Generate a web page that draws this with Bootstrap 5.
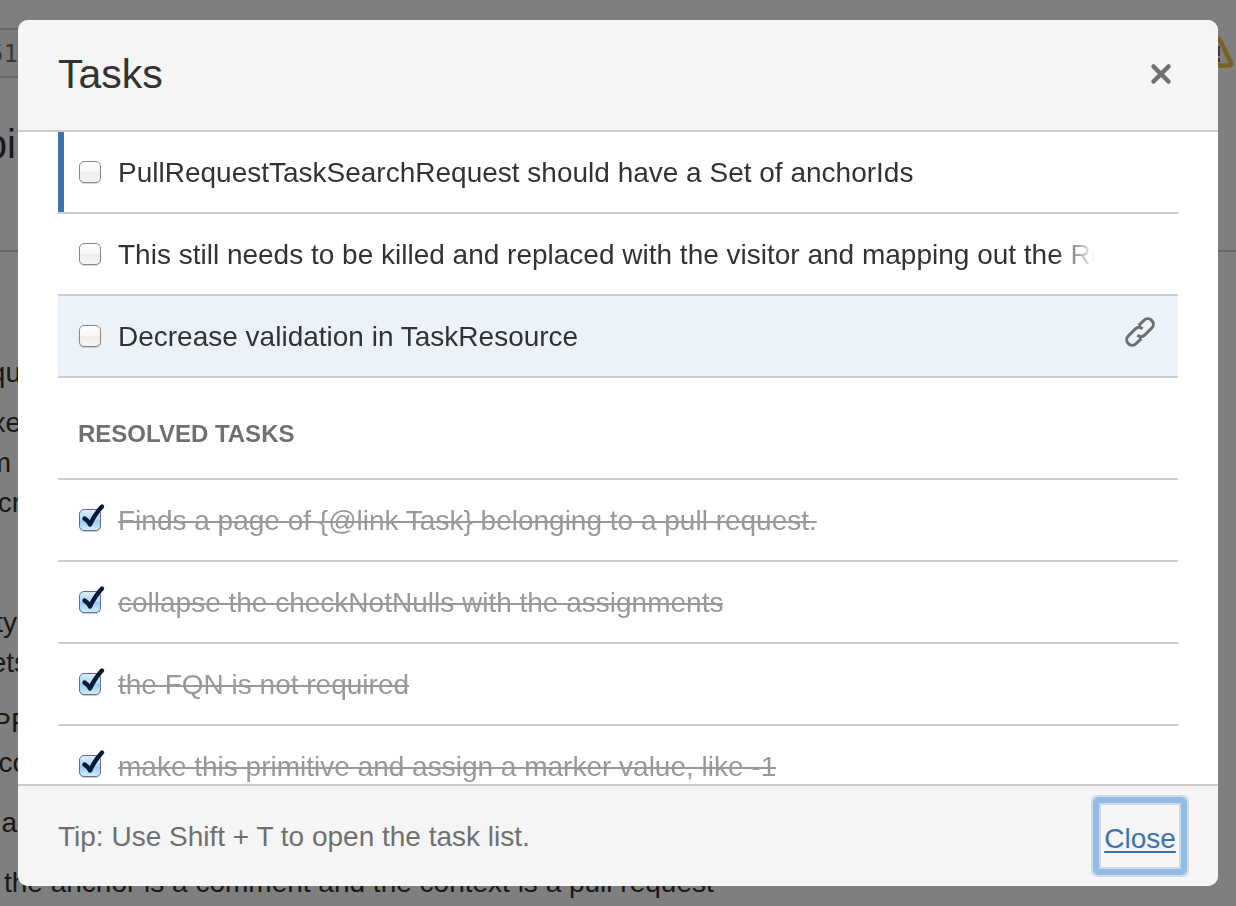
<!DOCTYPE html>
<html lang="en">
<head>
<meta charset="utf-8">
<meta name="viewport" content="width=device-width, initial-scale=1">
<title>Tasks</title>
<link href="https://cdn.jsdelivr.net/npm/bootstrap@5.3.0/dist/css/bootstrap.min.css" rel="stylesheet">
<style>
  body { font-family: "Liberation Sans", Arial, sans-serif; font-size: 28px; line-height: 40px; color: #333; background: #fff; height: 100vh; overflow: hidden; }
  .line { border-color: #ccc !important; border-width: 2px !important; }

  /* page behind the dialog */
  .branch-bar { padding-top: 28px; }
  .commit { width: 18px; height: 50px; border: solid #ccc; border-width: 2px 0; background: #f5f5f5; font: 24px/48px "DejaVu Sans Mono", monospace; color: #707070; }
  .pr-title { width: 16px; height: 172px; padding-top: 42px; font-size: 40px; line-height: 48px; }
  .frag { display: flex; justify-content: flex-end; white-space: nowrap; width: 21px; }
  .frag-short { width: 11px; }
  .frag-mid { width: 17px; }
  .frag-long { width: 28px; }
  .comments { padding-top: 101px; }
  .para { margin-top: 20px; }
  .para-tight { margin-top: 10px; }
  .para-wide { margin-top: 80px; }

  /* dialog */
  .tasks-dialog { max-width: none; height: calc(100vh - 40px); margin: 20px 18px; }
  .tasks-dialog .modal-content { border: 0; border-radius: 10px; height: 100%; max-height: none; color: inherit; }
  .tasks-dialog .modal-header { height: 112px; padding: 0 40px 2px; background: #f5f5f5; border-bottom: 2px solid #ccc; border-radius: 10px 10px 0 0; }
  .tasks-dialog .modal-title { font-size: 41px; line-height: 48px; font-weight: 400; }
  .tasks-dialog .modal-body { padding: 0 40px; scrollbar-width: none; }
  .tasks-dialog .modal-body::-webkit-scrollbar { display: none; }
  .tasks-dialog .modal-footer { height: 102px; padding: 0 37px 0 40px; background: #f5f5f5; border-top: 2px solid #ccc; border-radius: 0 0 10px 10px; color: #707070; }
  .tip { padding-top: 2px; }
  .icon-btn { color: #707070; line-height: 0; }

  .task { height: 82px; padding: 0 20px; gap: 12px; border-bottom: 2px solid #ccc; }
  .task-current { box-shadow: inset 6px 0 #3b73af; }
  .task-hover { background: #ebf2f9; }
  .task-text { padding-top: 2px; white-space: nowrap; overflow: hidden; }
  .task-fade { max-width: 977px; -webkit-mask-image: linear-gradient(to right, #000 calc(100% - 40px), transparent); mask-image: linear-gradient(to right, #000 calc(100% - 40px), transparent); }
  .task-done { color: #999; text-decoration: line-through 2px; }
  .resolved-title { height: 102px; padding: 12px 20px 0; font-size: 24px; font-weight: 700; color: #707070; border-bottom: 2px solid #ccc; }

  .task-check { appearance: none; flex: none; width: 28px; height: 34px; margin: 0; background: no-repeat url("data:image/svg+xml,%3Csvg xmlns='http://www.w3.org/2000/svg' width='28' height='34'%3E%3Cdefs%3E%3ClinearGradient id='g' x2='0' y2='1'%3E%3Cstop stop-color='%23fff'/%3E%3Cstop offset='.48' stop-color='%23f8f8f8'/%3E%3Cstop offset='.5' stop-color='%23ededed'/%3E%3Cstop offset='1' stop-color='%23f6f6f6'/%3E%3C/linearGradient%3E%3C/defs%3E%3Crect x='1.5' y='7.5' width='21' height='21' rx='5' fill='none' stroke='%23000' stroke-opacity='.15'/%3E%3Crect x='1.5' y='6.5' width='21' height='21' rx='4.5' fill='url(%23g)' stroke='%23888'/%3E%3C/svg%3E"); }
  .task-check:checked { background-image: url("data:image/svg+xml,%3Csvg xmlns='http://www.w3.org/2000/svg' width='28' height='34'%3E%3Cdefs%3E%3ClinearGradient id='g' x2='0' y2='1'%3E%3Cstop stop-color='%23dcecfa'/%3E%3Cstop offset='.48' stop-color='%23b4d8f7'/%3E%3Cstop offset='.5' stop-color='%2394c8f5'/%3E%3Cstop offset='1' stop-color='%23cdf0ff'/%3E%3C/linearGradient%3E%3C/defs%3E%3Crect x='1.5' y='7.5' width='21' height='21' rx='5' fill='none' stroke='%23000' stroke-opacity='.2'/%3E%3Crect x='1.5' y='6.5' width='21' height='21' rx='4.5' fill='url(%23g)' stroke='%236c6c8c'/%3E%3Cpath d='M6.500 15.500Q10 17.500 12 21.500 17 11 24 3.500' fill='none' stroke='%23041a35' stroke-width='4.400' stroke-linecap='round' stroke-linejoin='round'/%3E%3C/svg%3E"); }

  .close-link { width: 82px; height: 66px; padding: 6px 0 0; border: 2px solid #cadbee; border-radius: 2px; font-size: 28px; line-height: 40px; color: #3b73af; text-decoration: underline 2px; text-underline-offset: 3px; box-shadow: 0 0 0 6px #92bce3, 0 0 0 8px #cadbee; }
</style>
</head>
<body>
<main>
  <header class="border-bottom line">
    <div class="branch-bar d-flex justify-content-between">
      <div class="commit d-flex justify-content-end">51</div>
      <svg class="mt-2" width="42" height="32" viewBox="0 0 42 32" aria-hidden="true">
        <path d="M22.500 3.500Q24 1.500 25.500 3.500L37 26.500Q38 29.500 35 29.500H13Q10 29.500 11 26.500Z" fill="none" stroke="#f6c342" stroke-width="4.500" stroke-linejoin="round"/>
        <path d="M24 10v10M24 22v4" stroke="#707070" stroke-width="4"/>
      </svg>
    </div>
    <div class="pr-title d-flex justify-content-end">pi</div>
  </header>
  <section class="comments">
    <div class="frag">qu</div>
    <div class="para-tight"><div class="frag">xe</div><div class="frag frag-short">m</div><div class="frag">cr</div></div>
    <div class="para-wide"><div class="frag frag-mid">ty</div><div class="frag frag-long">ets</div></div>
    <div class="para"><div class="frag frag-long">PF</div><div class="frag frag-long">co</div></div>
    <div class="para"><div class="frag frag-mid">a</div></div>
    <div class="para ps-1 text-nowrap">the anchor is a comment and the context is a pull request</div>
  </section>
</main>

<div class="modal-backdrop show"></div>
<div class="modal d-block" role="dialog" aria-modal="true" aria-labelledby="tasksTitle">
  <div class="modal-dialog tasks-dialog modal-dialog-scrollable">
    <div class="modal-content">
      <div class="modal-header">
        <h2 class="modal-title" id="tasksTitle">Tasks</h2>
        <button type="button" class="btn p-1 border-0 icon-btn" aria-label="Close dialog">
          <svg width="26" height="26" viewBox="0 0 26 26"><path d="M5.500 5.500 20.500 20.500M20.500 5.500 5.500 20.500" stroke="currentColor" stroke-width="4.500" stroke-linecap="round"/></svg>
        </button>
      </div>
      <div class="modal-body">
        <div class="task task-current d-flex align-items-center"><input class="task-check" type="checkbox" id="t1"><label class="task-text" for="t1">PullRequestTaskSearchRequest should have a Set of anchorIds</label></div>
        <div class="task d-flex align-items-center"><input class="task-check" type="checkbox" id="t2"><label class="task-text task-fade" for="t2">This still needs to be killed and replaced with the visitor and mapping out the Re</label></div>
        <div class="task task-hover d-flex align-items-center"><input class="task-check" type="checkbox" id="t3"><label class="task-text" for="t3">Decrease validation in TaskResource</label>
          <a href="#t3" class="icon-btn ms-auto mb-2" aria-label="Link to task">
            <svg width="36" height="36" viewBox="-18 -18 36 36" fill="none" stroke="currentColor" stroke-width="3"><g transform="rotate(-45)"><path d="M3.500-5.500H11A5.500 5.500 0 0 1 11 5.500H1A5 5 0 0 1-4 .500"/><path d="M-3.500 5.500H-11A5.500 5.500 0 0 1-11-5.500H-1A5 5 0 0 1 4-.500"/></g></svg>
          </a>
        </div>
        <h3 class="resolved-title d-flex align-items-center m-0">RESOLVED TASKS</h3>
        <div class="task d-flex align-items-center"><input class="task-check" type="checkbox" id="t4" checked><label class="task-text task-done" for="t4">Finds a page of {@link Task} belonging to a pull request.</label></div>
        <div class="task d-flex align-items-center"><input class="task-check" type="checkbox" id="t5" checked><label class="task-text task-done" for="t5">collapse the checkNotNulls with the assignments</label></div>
        <div class="task d-flex align-items-center"><input class="task-check" type="checkbox" id="t6" checked><label class="task-text task-done" for="t6">the FQN is not required</label></div>
        <div class="task d-flex align-items-center"><input class="task-check" type="checkbox" id="t7" checked><label class="task-text task-done" for="t7">make this primitive and assign a marker value, like -1</label></div>
      </div>
      <div class="modal-footer justify-content-between">
        <span class="tip m-0">Tip: Use Shift + T to open the task list.</span>
        <button type="button" class="btn btn-link close-link m-0">Close</button>
      </div>
    </div>
  </div>
</div>
<script src="https://cdn.jsdelivr.net/npm/bootstrap@5.3.0/dist/js/bootstrap.bundle.min.js"></script>
</body>
</html>
